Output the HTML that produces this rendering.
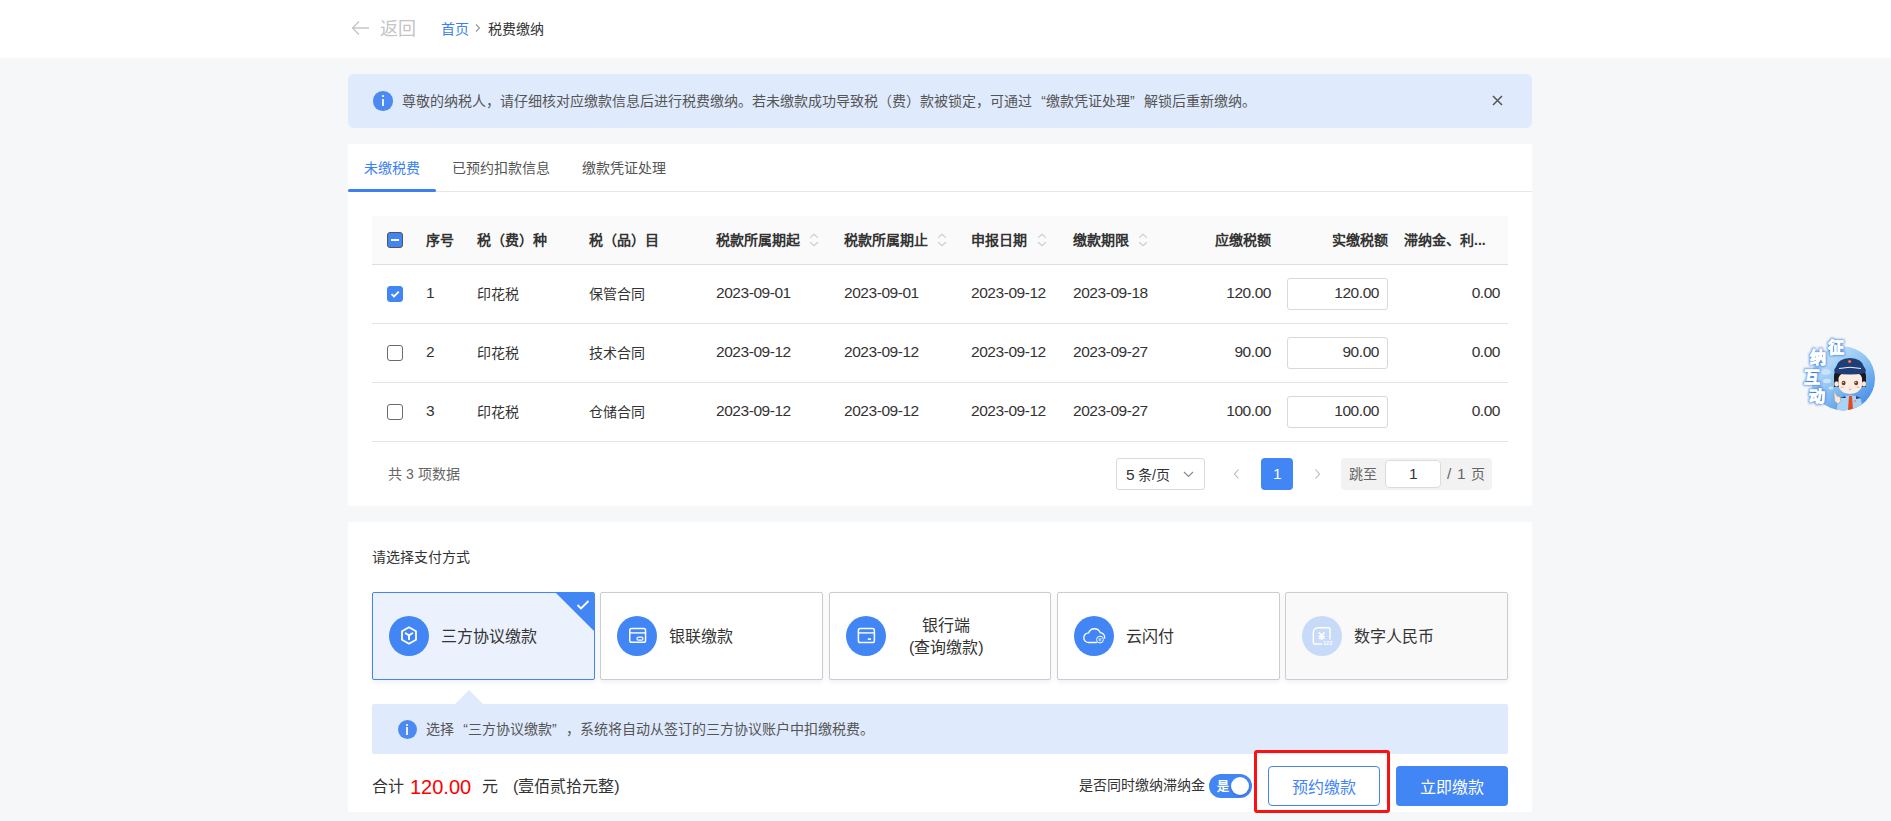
<!DOCTYPE html>
<html lang="zh-CN"><head><meta charset="utf-8">
<style>
*{box-sizing:border-box;margin:0;padding:0}
html,body{width:1891px;height:821px;overflow:hidden;background:#f6f7f9;font-family:"Liberation Sans",sans-serif;color:#333;font-size:14px}
.abs{position:absolute}
.t{position:absolute;white-space:nowrap;line-height:1}
.hdr{position:absolute;left:0;top:0;width:1891px;height:58px;background:#fff}
.panel{position:absolute;left:348px;width:1184px;background:#fff}
.alert{position:absolute;left:348px;top:74px;width:1184px;height:54px;background:#dfeafd;border-radius:6px}
.info{position:absolute;width:19.5px;height:19.5px;border-radius:50%;background:#4d89f2}
.info:before{content:"";position:absolute;left:8.7px;top:4px;width:2px;height:2px;background:#e8effd;border-radius:0.5px}
.info:after{content:"";position:absolute;left:8.7px;top:7.8px;width:2px;height:7.5px;background:#e8effd}
.num{font-size:15.5px;letter-spacing:-0.45px}
.ql{display:inline-block;width:14px;text-align:right}
.qr{display:inline-block;width:14px;text-align:left}
.hline{position:absolute;left:372px;width:1136px;height:1px;background:#e4e4e4}
.cb{position:absolute;left:387px;width:16px;height:16px;border:1px solid #6b6b6b;border-radius:3px;background:#fff}
.sort{position:absolute;width:10px;height:14px}
.inp{position:absolute;left:1287px;width:101px;height:32px;border:1px solid #d9d9d9;border-radius:3px;background:#fff}
.card{position:absolute;top:592px;width:223px;height:88px;border:1px solid #cdcdcd;border-radius:2px;background:#fff;box-shadow:0 2px 5px rgba(30,50,140,0.08)}
.circ{position:absolute;top:23px;width:40px;height:40px;border-radius:50%;background:#4285f4}
.ct{position:absolute;font-size:16px;line-height:1;white-space:nowrap;color:#333}
</style></head><body>
<!-- header -->
<div class="hdr"></div>
<svg class="abs" style="left:351px;top:20px" width="19" height="16" viewBox="0 0 19 16"><path d="M8 1.5 L1.5 8 L8 14.5 M1.5 8 H18" fill="none" stroke="#c6c6c6" stroke-width="1.4"/></svg>
<div class="t" style="left:380px;top:20px;font-size:18px;color:#c4c4c4">返回</div>
<div class="t" style="left:441px;top:22px;font-size:14px;color:#3b7ff3">首页</div>
<svg class="abs" style="left:474px;top:23px" width="8" height="10" viewBox="0 0 8 10"><path d="M2 1.5 L5.5 5 L2 8.5" fill="none" stroke="#999" stroke-width="1.2"/></svg>
<div class="t" style="left:488px;top:22px;font-size:14px;color:#333">税费缴纳</div>

<!-- alert -->
<div class="alert"></div>
<div class="info" style="left:373.2px;top:91.2px"></div>
<div class="t" style="left:402px;top:94px;font-size:14px;color:#555">尊敬的纳税人，请仔细核对应缴款信息后进行税费缴纳。若未缴款成功导致税（费）款被锁定，可通过<span class="ql">“</span>缴款凭证处理<span class="qr">”</span>解锁后重新缴纳。</div>
<svg class="abs" style="left:1492px;top:95px" width="11" height="11" viewBox="0 0 11 11"><path d="M1 1 L10 10 M10 1 L1 10" stroke="#555" stroke-width="1.5"/></svg>

<!-- table panel -->
<div class="panel" style="top:144px;height:362px"></div>
<div class="t" style="left:364px;top:161px;color:#3b7ff3">未缴税费</div>
<div class="t" style="left:452px;top:161px;color:#555">已预约扣款信息</div>
<div class="t" style="left:582px;top:161px;color:#555">缴款凭证处理</div>
<div class="abs" style="left:348px;top:191px;width:1184px;height:1px;background:#e6e6e6"></div>
<div class="abs" style="left:348px;top:189px;width:88px;height:3px;background:#3b7ff3;border-radius:2px"></div>

<!-- table header -->
<div class="abs" style="left:372px;top:216px;width:1136px;height:48px;background:#fafafa"></div>
<div class="hline" style="top:264px;background:#dedede"></div>
<div class="hline" style="top:323px"></div>
<div class="hline" style="top:382px"></div>
<div class="hline" style="top:441px"></div>

<div id="thead" style="font-weight:bold;color:#333">
<div class="cb" style="top:232px;background:#4285f4;border-color:#555"><div class="abs" style="left:3px;top:6px;width:8px;height:2px;background:#fff"></div></div>
<div class="t" style="left:426px;top:233px">序号</div>
<div class="t" style="left:477px;top:233px">税（费）种</div>
<div class="t" style="left:589px;top:233px">税（品）目</div>
<div class="t" style="left:716px;top:233px">税款所属期起</div>
<div class="t" style="left:844px;top:233px">税款所属期止</div>
<div class="t" style="left:971px;top:233px">申报日期</div>
<div class="t" style="left:1073px;top:233px">缴款期限</div>
<div class="t" style="left:1215px;top:233px">应缴税额</div>
<div class="t" style="left:1332px;top:233px">实缴税额</div>
<div class="t" style="left:1404px;top:233px">滞纳金、利...</div>
</div>
<svg class="sort" style="left:809px;top:233px" viewBox="0 0 10 14"><path d="M1.2 4.6 L5 1.2 L8.8 4.6 M1.2 9.3 L5 12.7 L8.8 9.3" fill="none" stroke="#cccccc" stroke-width="1.2"/></svg>
<svg class="sort" style="left:937px;top:233px" viewBox="0 0 10 14"><path d="M1.2 4.6 L5 1.2 L8.8 4.6 M1.2 9.3 L5 12.7 L8.8 9.3" fill="none" stroke="#cccccc" stroke-width="1.2"/></svg>
<svg class="sort" style="left:1037px;top:233px" viewBox="0 0 10 14"><path d="M1.2 4.6 L5 1.2 L8.8 4.6 M1.2 9.3 L5 12.7 L8.8 9.3" fill="none" stroke="#cccccc" stroke-width="1.2"/></svg>
<svg class="sort" style="left:1138px;top:233px" viewBox="0 0 10 14"><path d="M1.2 4.6 L5 1.2 L8.8 4.6 M1.2 9.3 L5 12.7 L8.8 9.3" fill="none" stroke="#cccccc" stroke-width="1.2"/></svg>

<!-- rows -->
<div class="cb" style="top:286px;background:#4285f4;border-color:#4285f4"><svg class="abs" style="left:1px;top:1px" width="12" height="12" viewBox="0 0 12 12"><path d="M2.5 6.2 L5 8.5 L9.8 3.6" fill="none" stroke="#fff" stroke-width="1.8"/></svg></div>
<div class="cb" style="top:345px"></div>
<div class="cb" style="top:404px"></div>

<div id="rows">
<div class="t num" style="left:426px;top:285px">1</div>
<div class="t" style="left:477px;top:287px">印花税</div>
<div class="t" style="left:589px;top:287px">保管合同</div>
<div class="t num" style="left:716px;top:285px">2023-09-01</div>
<div class="t num" style="left:844px;top:285px">2023-09-01</div>
<div class="t num" style="left:971px;top:285px">2023-09-12</div>
<div class="t num" style="left:1073px;top:285px">2023-09-18</div>
<div class="t num" style="right:620px;top:285px">120.00</div>
<div class="inp" style="top:278px"></div>
<div class="t num" style="right:512px;top:285px">120.00</div>
<div class="t num" style="right:391px;top:285px">0.00</div>
<div class="t num" style="left:426px;top:344px">2</div>
<div class="t" style="left:477px;top:346px">印花税</div>
<div class="t" style="left:589px;top:346px">技术合同</div>
<div class="t num" style="left:716px;top:344px">2023-09-12</div>
<div class="t num" style="left:844px;top:344px">2023-09-12</div>
<div class="t num" style="left:971px;top:344px">2023-09-12</div>
<div class="t num" style="left:1073px;top:344px">2023-09-27</div>
<div class="t num" style="right:620px;top:344px">90.00</div>
<div class="inp" style="top:337px"></div>
<div class="t num" style="right:512px;top:344px">90.00</div>
<div class="t num" style="right:391px;top:344px">0.00</div>
<div class="t num" style="left:426px;top:403px">3</div>
<div class="t" style="left:477px;top:405px">印花税</div>
<div class="t" style="left:589px;top:405px">仓储合同</div>
<div class="t num" style="left:716px;top:403px">2023-09-12</div>
<div class="t num" style="left:844px;top:403px">2023-09-12</div>
<div class="t num" style="left:971px;top:403px">2023-09-12</div>
<div class="t num" style="left:1073px;top:403px">2023-09-27</div>
<div class="t num" style="right:620px;top:403px">100.00</div>
<div class="inp" style="top:396px"></div>
<div class="t num" style="right:512px;top:403px">100.00</div>
<div class="t num" style="right:391px;top:403px">0.00</div>
</div>

<!-- pagination -->
<div class="t" style="left:388px;top:467px;color:#666">共 3 项数据</div>

<!-- pagination -->
<div class="abs" style="left:1116px;top:458px;width:89px;height:32px;border:1px solid #d9d9d9;border-radius:3px;background:#fff"></div>
<div class="t" style="left:1126px;top:467px;color:#333"><span class="num">5</span> 条/页</div>
<svg class="abs" style="left:1182.5px;top:470px" width="11" height="9" viewBox="0 0 11 9"><path d="M1 2 L5.5 6.5 L10 2" fill="none" stroke="#888" stroke-width="1.1"/></svg>
<svg class="abs" style="left:1232px;top:468px" width="9" height="12" viewBox="0 0 9 12"><path d="M6.5 1.5 L2.5 6 L6.5 10.5" fill="none" stroke="#b8b8b8" stroke-width="1.1"/></svg>
<div class="abs" style="left:1261px;top:458px;width:32px;height:32px;background:#4285f4;border-radius:4px"></div>
<div class="t num" style="left:1261px;top:466px;width:32px;text-align:center;color:#fff">1</div>
<svg class="abs" style="left:1313px;top:468px" width="9" height="12" viewBox="0 0 9 12"><path d="M2.5 1.5 L6.5 6 L2.5 10.5" fill="none" stroke="#b8b8b8" stroke-width="1.1"/></svg>
<div class="abs" style="left:1341px;top:458px;width:151px;height:32px;background:#f2f2f2;border-radius:4px"></div>
<div class="t" style="left:1349px;top:467px;color:#666">跳至</div>
<div class="abs" style="left:1385px;top:460px;width:56px;height:28px;background:#fff;border:1px solid #dcdcdc;border-radius:4px"></div>
<div class="t num" style="left:1385px;top:466px;width:56px;text-align:center;color:#333">1</div>
<div class="t num" style="left:1447px;top:466px;color:#666">/</div><div class="t num" style="left:1457px;top:466px;color:#666">1</div><div class="t" style="left:1471px;top:467px;color:#666">页</div>

<!-- payment panel -->
<div class="panel" style="top:522px;height:290px"></div>
<div class="t" style="left:372px;top:550px;color:#333">请选择支付方式</div>

<div class="card" style="left:372px;background:#ebf1fd;border-color:#4285f4;overflow:hidden">
  <div class="abs" style="right:0;top:0;width:0;height:0;border-top:38px solid #4285f4;border-left:38px solid transparent"></div>
  <svg class="abs" style="left:203px;top:6px" width="14" height="12" viewBox="0 0 14 12"><path d="M1.5 6 L5 9.5 L12.5 2" fill="none" stroke="#fff" stroke-width="1.8"/></svg>
  <div class="circ" style="left:16px"><svg class="abs" style="left:10px;top:10px" width="20" height="20" viewBox="0 0 20 20"><path d="M10 1.3 L17 5.3 L17 13.7 L10 17.7 L3 13.7 L3 5.3 Z" fill="none" stroke="#fff" stroke-width="1.8" stroke-linejoin="round"/><path d="M6.6 7.2 L10 9.4 L13.4 7.2 M10 9.4 V13.3" fill="none" stroke="#fff" stroke-width="1.9" stroke-linecap="round"/></svg></div>
  <div class="ct" style="left:68px;top:36px">三方协议缴款</div>
</div>
<div class="card" style="left:600px">
  <div class="circ" style="left:16px"><svg class="abs" style="left:10px;top:10px" width="20" height="20" viewBox="0 0 20 20"><rect x="2.75" y="2.6" width="15.8" height="13.7" rx="1.8" fill="none" stroke="#fff" stroke-width="1.5"/><path d="M2.75 6.9 H18.5" stroke="#fff" stroke-width="1.4"/><rect x="10" y="11.2" width="6" height="2.9" rx="1.45" fill="none" stroke="#fff" stroke-width="1.2"/></svg></div>
  <div class="ct" style="left:68px;top:36px">银联缴款</div>
</div>
<div class="card" style="left:829px;width:222px">
  <div class="circ" style="left:16px"><svg class="abs" style="left:10px;top:10px" width="20" height="20" viewBox="0 0 20 20"><rect x="2.4" y="2.6" width="16" height="14" rx="1.8" fill="none" stroke="#fff" stroke-width="1.5"/><path d="M2.4 6.9 H18.4" stroke="#fff" stroke-width="1.4"/><rect x="11.8" y="12.3" width="3.2" height="1.6" fill="#fff"/></svg></div>
  <div class="ct" style="left:92px;top:25px">银行端</div>
  <div class="ct" style="left:79px;top:47px">(查询缴款)</div>
</div>
<div class="card" style="left:1057px">
  <div class="circ" style="left:16px"><svg class="abs" style="left:9px;top:10px" width="24" height="20" viewBox="0 0 24 20"><path d="M13.5 16.5 H5.6 A4.8 4.8 0 0 1 5.6 6.9 A6.2 6.2 0 0 1 17.2 6.6 A4.8 4.8 0 0 1 21.6 12.2" fill="none" stroke="#fff" stroke-width="1.3" stroke-linecap="round"/><circle cx="17" cy="13.6" r="3.4" fill="#4285f4" stroke="#fff" stroke-width="1"/><path d="M15.6 12 L17 13.6 L18.4 12 M17 13.6 V15.6 M15.6 14 H18.4" fill="none" stroke="#fff" stroke-width="0.7"/></svg></div>
  <div class="ct" style="left:68px;top:36px">云闪付</div>
</div>
<div class="card" style="left:1285px;background:#f9f9f9">
  <div class="circ" style="left:16px;background:#c7daf8"><svg class="abs" style="left:9px;top:9px" width="22" height="22" viewBox="0 0 22 22"><path d="M19 14.5 V4 Q19 2.7 17.7 2.7 H7 A4.7 4.7 0 0 0 2.3 7.4 V17.6 Q2.3 19 3.7 19 H11" fill="none" stroke="#fff" stroke-width="1.4"/><path d="M7.6 7.2 L10.6 10.3 L13.6 7.2 M10.6 10.3 V15.2 M7.6 11.2 H13.6 M7.6 13.3 H13.6" fill="none" stroke="#fff" stroke-width="1.4"/><text x="12" y="19.6" font-size="5.6" fill="#fff" font-family="Liberation Sans" font-weight="bold">123</text></svg></div>
  <div class="ct" style="left:68px;top:36px">数字人民币</div>
</div>

<!-- info box -->
<div class="abs" style="left:372px;top:704px;width:1136px;height:50px;background:#dfeafd;border-radius:2px"></div>
<div class="abs" style="left:455px;top:690px;width:0;height:0;border-left:14px solid transparent;border-right:14px solid transparent;border-bottom:14px solid #dfeafd"></div>
<div class="info" style="left:397.5px;top:719.5px"></div>
<div class="t" style="left:426px;top:722px;color:#555">选择<span class="ql">“</span>三方协议缴款<span class="qr">”</span>，系统将自动从签订的三方协议账户中扣缴税费。</div>

<!-- bottom -->
<div class="t" style="left:372px;top:779px;font-size:16px;color:#333">合计</div>
<div class="t" style="left:410px;top:777px;font-size:20px;color:#ff0000">120.00</div>
<div class="t" style="left:482px;top:779px;font-size:16px;color:#333">元</div>
<div class="t" style="left:513px;top:779px;font-size:16px;color:#333">(壹佰贰拾元整)</div>

<div class="t" style="left:1079px;top:778px;color:#333">是否同时缴纳滞纳金</div>
<div class="abs" style="left:1209px;top:774px;width:43px;height:24px;border-radius:12px;background:#4285f4"></div>
<div class="t" style="left:1217px;top:781px;font-size:12px;color:#fff;font-weight:bold">是</div>
<div class="abs" style="left:1231px;top:777px;width:18px;height:18px;border-radius:50%;background:#fff;box-shadow:0 1px 2px rgba(0,0,0,.2)"></div>

<div class="abs" style="left:1268px;top:766px;width:112px;height:40px;border:1px solid #4285f4;border-radius:4px;background:#fff"></div>
<div class="t" style="left:1268px;top:780px;width:112px;text-align:center;font-size:16px;color:#4285f4">预约缴款</div>
<div class="abs" style="left:1396px;top:766px;width:112px;height:40px;border-radius:4px;background:#4285f4"></div>
<div class="t" style="left:1396px;top:780px;width:112px;text-align:center;font-size:16px;color:#fff">立即缴款</div>
<div class="abs" style="left:1254px;top:750px;width:136px;height:63px;border:3px solid #fa1212;border-radius:3px"></div>

<!-- mascot -->
<svg class="abs" style="left:1795px;top:330px" width="90" height="90" viewBox="1795 330 90 90">
<defs>
<linearGradient id="mg" x1="0.1" y1="0" x2="0.9" y2="1"><stop offset="0" stop-color="#cfe9fb"/><stop offset="0.5" stop-color="#8cc3f2"/><stop offset="1" stop-color="#3a84e8"/></linearGradient>
<filter id="glow" x="-50%" y="-50%" width="200%" height="200%"><feGaussianBlur stdDeviation="1"/></filter>
<clipPath id="cc"><circle cx="1843" cy="378.5" r="32"/></clipPath>
</defs>
<circle cx="1843" cy="378.5" r="32" fill="url(#mg)"/>
<ellipse cx="1826" cy="372" rx="5" ry="3" fill="#e8f3fd" opacity="0.5"/>
<ellipse cx="1827" cy="381" rx="4" ry="2.3" fill="#e8f3fd" opacity="0.6"/>
<ellipse cx="1831" cy="388" rx="2.4" ry="1.5" fill="#e8f3fd" opacity="0.7"/>
<g clip-path="url(#cc)">
<!-- shirt -->
<path d="M1836 412 L1838 399 Q1843 395 1849 395 L1852 395 Q1859 396 1861 399 L1863 408 Q1852 414 1836 412 Z" fill="#a8d3f4" stroke="#5b8fc4" stroke-width="0.4"/>
<path d="M1840 398 L1845 396 L1846 398 Z M1856 396 L1861 398 L1856 399 Z" fill="#23407a"/>
<path d="M1849 396 L1852 396 L1853 410 L1850.5 412 L1848 410 Z" fill="#e5471f"/>
<circle cx="1855" cy="401" r="1" fill="#e7866a"/>
</g>
<!-- hand -->
<path d="M1834.5 401 L1834 393 Q1834.5 391.5 1835.5 393 L1837 396 L1840 396.5 L1841 401 L1838 404 Z" fill="#fbe6da" stroke="#777" stroke-width="0.4"/>
<!-- hair -->
<path d="M1834 376 Q1834 367 1850 366 Q1866 367 1866 376 L1866 387 L1834 387 Z" fill="#1a1a1e"/>
<!-- ears -->
<ellipse cx="1836.5" cy="384" rx="2.3" ry="2.8" fill="#fce7dc" stroke="#444" stroke-width="0.3"/>
<ellipse cx="1864" cy="384" rx="2.3" ry="2.8" fill="#fce7dc" stroke="#444" stroke-width="0.3"/>
<!-- face -->
<path d="M1838.5 378 Q1840 372 1850 372 Q1861 372 1862 378 L1862 386 Q1860 393 1850 394 Q1840 393 1838.5 386 Z" fill="#fdeee5"/>
<ellipse cx="1843.6" cy="383" rx="2" ry="2.2" fill="#7a3e20"/>
<ellipse cx="1856.2" cy="383" rx="2" ry="2.2" fill="#7a3e20"/>
<circle cx="1843.2" cy="382.3" r="0.6" fill="#fff"/>
<circle cx="1855.8" cy="382.3" r="0.6" fill="#fff"/>
<ellipse cx="1842" cy="387.3" rx="1.6" ry="0.8" fill="#f7b79c"/>
<ellipse cx="1858" cy="387.3" rx="1.6" ry="0.8" fill="#f7b79c"/>
<path d="M1848.8 389 Q1850 390.3 1851.4 389" fill="none" stroke="#555" stroke-width="0.4"/>
<!-- hat -->
<path d="M1836 367 Q1838 358.5 1850 358 Q1862 358.5 1864 367 Q1867 370 1865 373 Q1850 376 1835 373 Q1833 370 1836 367 Z" fill="#1f3d78"/>
<path d="M1839 368.5 Q1850 366 1861 368.5" fill="none" stroke="#eef2f8" stroke-width="1"/>
<circle cx="1849.6" cy="361.5" r="1.8" fill="#e9502c"/>
<circle cx="1849.6" cy="361.5" r="0.7" fill="#f7c63c"/>
<!-- text -->
<g font-family="Liberation Sans" font-weight="bold" font-size="16" text-anchor="middle">
<g fill="#2b6fe0" stroke="#2b6fe0" stroke-width="2.2" filter="url(#glow)" opacity="0.85">
<text x="1836" y="352.5">征</text><text x="1818" y="362.5">纳</text><text x="1811.5" y="382.5">互</text><text x="1817" y="401.5">动</text>
</g>
<g fill="#fff" stroke="#fff" stroke-width="0.8">
<text x="1836" y="352.5">征</text><text x="1818" y="362.5">纳</text><text x="1811.5" y="382.5">互</text><text x="1817" y="401.5">动</text>
</g>
</g>
</svg>
</body></html>
